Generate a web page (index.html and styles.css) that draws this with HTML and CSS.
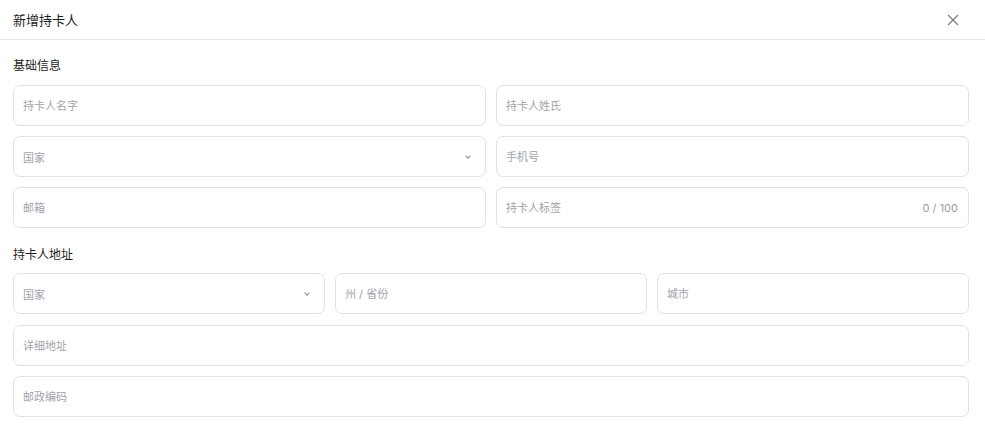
FILE: index.html
```html
<!DOCTYPE html>
<html lang="zh-CN">
<head>
  <meta charset="UTF-8">
  <title>新增持卡人</title>
  <link rel="stylesheet" href="styles.css">
</head>
<body>
  <div class="dialog">
    <!-- Header with close button -->
    <div class="dialog-header">
      <span class="dialog-title">新增持卡人</span>
      <button class="close-btn" type="button">
        <svg width="12" height="12" viewBox="0 0 12 12"><path d="M1 1L11 11M11 1L1 11" stroke="#7a7a80" stroke-width="1.2" fill="none"/></svg>
      </button>
    </div>

    <div class="dialog-body">
      <div class="section-title">基础信息</div>
      <div class="grid two">
        <div class="field"><input placeholder="持卡人名字"></div>
        <div class="field"><input placeholder="持卡人姓氏"></div>
        <div class="field select"><span class="placeholder">国家</span><span class="chevron"></span></div>
        <div class="field"><input placeholder="手机号"></div>
        <div class="field"><input placeholder="邮箱"></div>
        <div class="field"><input placeholder="持卡人标签"><span class="counter">0 / 100</span></div>
      </div>

      <div class="section-title second">持卡人地址</div>
      <div class="grid three">
        <div class="field select"><span class="placeholder">国家</span><span class="chevron"></span></div>
        <div class="field"><input placeholder="州 / 省份"></div>
        <div class="field"><input placeholder="城市"></div>
      </div>
      <div class="grid one">
        <div class="field"><input placeholder="详细地址"></div>
        <div class="field"><input placeholder="邮政编码"></div>
      </div>
    </div>
  </div>
</body>
</html>
```

FILE: styles.css
```css
body {
  margin: 0;
  background: #fff;
  font-family: Inter, "Noto Sans CJK SC", sans-serif;
  color: #1d1d20;
}
.dialog-header {
  height: 39px;
  border-bottom: 1px solid #e6e6ea;
  display: flex;
  align-items: center;
  justify-content: space-between;
  padding: 0 26px 0 13px;
}
.dialog-title {
  font-size: 13px;
  font-weight: 400;
}
.close-btn {
  border: none;
  background: none;
  padding: 0;
  width: 12px;
  height: 12px;
  display: flex;
  cursor: pointer;
}
.dialog-body {
  padding: 16px 16px 0 13px;
}
.section-title {
  font-size: 12px;
  font-weight: 400;
  line-height: 20px;
  margin-bottom: 9px;
}
.section-title.second {
  margin-top: 17px;
  margin-bottom: 8px;
}
.grid {
  display: grid;
  gap: 10px;
}
.grid.two { grid-template-columns: 1fr 1fr; }
.grid.three { grid-template-columns: 1fr 1fr 1fr; }
.grid.one { margin-top: 11px; }
.field {
  height: 41px;
  box-sizing: border-box;
  border: 1px solid #e1e1e6;
  border-radius: 7px;
  display: flex;
  align-items: center;
  padding: 0 12px 0 9px;
}
.field input {
  flex: 1;
  border: none;
  outline: none;
  padding: 0;
  font-family: inherit;
  font-size: 11px;
  color: #1d1d20;
  background: none;
  min-width: 0;
}
.field input::placeholder,
.placeholder {
  color: #a3a3ab;
}
.placeholder {
  flex: 1;
  font-size: 11px;
}
.counter {
  font-size: 11px;
  color: #9c9ca4;
  margin-right: -2px;
}
.chevron {
  width: 3px;
  height: 3px;
  border-right: 1px solid #8a8a92;
  border-bottom: 1px solid #8a8a92;
  transform: rotate(45deg);
  margin: -2px 3px 0 0;
}
```
